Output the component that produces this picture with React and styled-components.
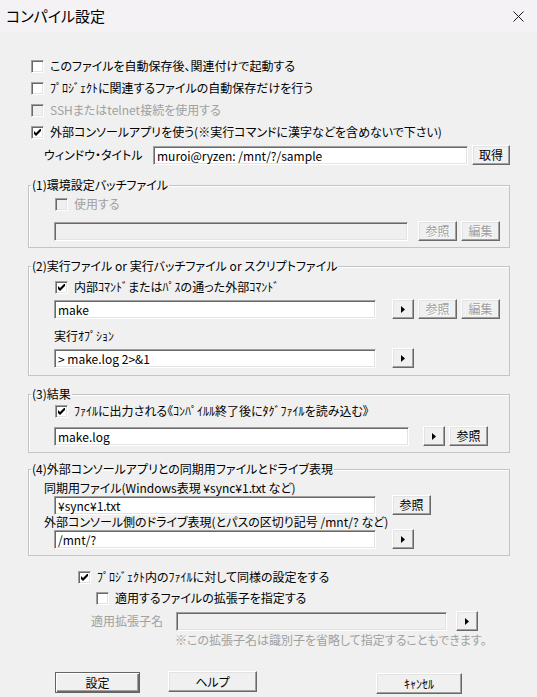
import React from 'react'
import styled, { createGlobalStyle } from 'styled-components'

const Global = createGlobalStyle`
  html, body { margin: 0; padding: 0; background: #f0f0f0; }
  * { box-sizing: border-box; }
`

const Dialog = styled.div`
  width: 537px;
  height: 697px;
  background: #f0f0f0;
  display: flex;
  flex-direction: column;
  overflow: hidden;
  font-family: "Noto Sans CJK JP", "Noto Sans", sans-serif;
  font-feature-settings: "palt";
  font-size: 12px;
  line-height: 14px;
  color: #000;
`

const TitleBar = styled.div`
  height: 32px;
  flex: none;
  background: #f4f2f5;
  display: flex;
  align-items: center;
  justify-content: space-between;
  padding: 0 13px 0 6px;
  font-size: 15px;
  line-height: 20px;
`

const Body = styled.div`
  display: flex;
  flex-direction: column;
  padding: 0 27px 0 28px;
`

/* half-width katakana keep their fixed half-em width */
const Hw = styled.span`
  font-feature-settings: normal;
`

const Row = styled.div`
  display: flex;
  align-items: center;
  height: ${p => p.$h || 20}px;
  margin-top: ${p => p.$mt || 0}px;
  margin-left: ${p => p.$ml || 0}px;
`

const CheckRow = styled.label`
  display: flex;
  align-items: center;
  gap: 6px;
  height: 14px;
  margin-top: ${p => p.$mt || 0}px;
  margin-left: ${p => p.$ml || 0}px;
  color: ${p => (p.$disabled ? '#a0a0a0' : '#000')};
  white-space: nowrap;
`

const Box = styled.span`
  width: 13px;
  height: 13px;
  flex: none;
  border: 1px solid;
  border-color: #a0a0a0 #ffffff #ffffff #a0a0a0;
  box-shadow: inset 1px 1px #696969, inset -1px -1px #e3e3e3;
  background: ${p => (p.$disabled ? '#f0f0f0' : '#ffffff')};
  display: flex;
  align-items: center;
  justify-content: center;
`

const Label = styled.span`
  display: block;
  width: ${p => (p.$w ? `${p.$w}px` : 'auto')};
  flex: none;
  margin-top: ${p => p.$mt || 0}px;
  margin-left: ${p => p.$ml || 0}px;
  color: ${p => (p.$disabled ? '#a0a0a0' : '#000')};
  white-space: nowrap;
`

const Field = styled.div`
  width: ${p => p.$w}px;
  height: 19px;
  flex: none;
  border: 1px solid;
  border-color: #a0a0a0 #ffffff #ffffff #a0a0a0;
  box-shadow: inset 1px 1px #696969, inset -1px -1px #e3e3e3;
  background: ${p => (p.$disabled ? '#f0f0f0' : '#ffffff')};
  padding: 2px 0 0 3px;
  margin-left: ${p => p.$ml || 0}px;
  white-space: nowrap;
  overflow: hidden;
`

const Button = styled.div`
  width: ${p => p.$w}px;
  height: ${p => p.$h || 20}px;
  flex: none;
  margin-left: ${p => p.$ml || 0}px;
  margin-top: ${p => p.$mt || 0}px;
  border: 1px solid;
  border-color: ${p => (p.$default ? '#646464' : '#ffffff #696969 #696969 #ffffff')};
  box-shadow: ${p =>
    p.$default
      ? 'inset 1px 1px #ffffff, inset -1px -1px #696969, inset -2px -2px #a0a0a0'
      : 'inset -1px -1px #a0a0a0, inset 1px 1px #e3e3e3'};
  background: #f0f0f0;
  display: flex;
  align-items: center;
  justify-content: center;
  color: ${p => (p.$disabled ? '#a0a0a0' : '#000')};
  text-shadow: ${p => (p.$disabled ? '1px 1px #ffffff' : 'none')};
  white-space: nowrap;
`

const Group = styled.fieldset`
  margin: ${p => p.$mt || 0}px 0 0 0;
  padding: 0;
  border: 1px solid #c4c4c4;
  box-shadow: inset 1px 1px #ffffff;
  min-inline-size: auto;
`

const Legend = styled.legend`
  margin-left: 2px;
  padding: 0 1px;
  line-height: 14px;
`

const GroupBody = styled.div`
  display: flex;
  flex-direction: column;
  padding: 0 8px ${p => p.$pb || 6}px ${p => p.$pl || 25}px;
`

const Note = styled.div`
  margin: 2px 0 0 147px;
  height: 14px;
  color: #a0a0a0;
  white-space: nowrap;
`

const Footer = styled.div`
  display: flex;
  align-items: flex-start;
  margin-top: 24px;
  padding-left: 27px;
`

function Check({ checked, disabled, children, mt, ml }) {
  return (
    <CheckRow $mt={mt} $ml={ml} $disabled={disabled}>
      <Box $disabled={disabled}>
        {checked && (
          <svg width="7" height="7" viewBox="0 0 7 7">
            <polygon points="0,2 2,4 6,0 7,0 7,2 2,7 0,5" fill="#000" />
          </svg>
        )}
      </Box>
      <span>{children}</span>
    </CheckRow>
  )
}

function Arrow({ ml }) {
  return (
    <Button $w={22} $ml={ml}>
      <svg width="4" height="7" viewBox="0 0 4 7">
        <polygon points="0,0 4,3.5 0,7" fill="#000" />
      </svg>
    </Button>
  )
}

export default function App() {
  return (
    <Dialog>
      <Global />
      <TitleBar>
        <span>コンパイル設定</span>
        <svg width="11" height="11" viewBox="0 0 11 11">
          <path d="M0.5 0.5 L10.5 10.5 M10.5 0.5 L0.5 10.5" stroke="#1a1a1a" strokeWidth="1" />
        </svg>
      </TitleBar>
      <Body>
        <Check mt={27} ml={3}>このファイルを自動保存後、関連付けで起動する</Check>
        <Check mt={8} ml={3}><Hw>ﾌﾟﾛｼﾞｪｸﾄ</Hw>に関連するファイルの自動保存だけを行う</Check>
        <Check mt={8} ml={3} disabled>SSHまたはtelnet接続を使用する</Check>
        <Check mt={8} ml={3} checked>外部コンソールアプリを使う(※実行コマンドに漢字などを含めないで下さい)</Check>
        <Row $mt={6} $ml={16}>
          <Label $w={109}>ウィンドウ・タイトル</Label>
          <Field $w={315}>muroi@ryzen: /mnt/?/sample</Field>
          <Button $w={38} $ml={4}>取得</Button>
        </Row>

        <Group $mt={13}>
          <Legend>(1)環境設定バッチファイル</Legend>
          <GroupBody>
            <Check mt={5} ml={1} disabled>使用する</Check>
            <Row $mt={10}>
              <Field $w={354} $disabled />
              <Button $w={39} $ml={10} $disabled>参照</Button>
              <Button $w={39} $ml={4} $disabled>編集</Button>
            </Row>
          </GroupBody>
        </Group>

        <Group $mt={11}>
          <Legend>(2)実行ファイル or 実行バッチファイル or スクリプトファイル</Legend>
          <GroupBody $pb={7}>
            <Check mt={7} ml={1} checked>内部<Hw>ｺﾏﾝﾄﾞ</Hw>または<Hw>ﾊﾟｽ</Hw>の通った外部<Hw>ｺﾏﾝﾄﾞ</Hw></Check>
            <Row $mt={5}>
              <Field $w={322}>make</Field>
              <Arrow ml={16} />
              <Button $w={39} $ml={4} $disabled>参照</Button>
              <Button $w={39} $ml={4} $disabled>編集</Button>
            </Row>
            <Label $mt={10}>実行<Hw>ｵﾌﾟｼｮﾝ</Hw></Label>
            <Row $mt={5}>
              <Field $w={322}>&gt; make.log 2&gt;&amp;1</Field>
              <Arrow ml={16} />
            </Row>
          </GroupBody>
        </Group>

        <Group $mt={11}>
          <Legend>(3)結果</Legend>
          <GroupBody>
            <Check mt={3} ml={1} checked>
              <Hw>ﾌｧｲﾙ</Hw>に出力される《<Hw>ｺﾝﾊﾟｲﾙﾙ</Hw>終了後に<Hw>ﾀｸﾞﾌｧｲﾙ</Hw>を読み込む》
            </Check>
            <Row $mt={8}>
              <Field $w={355}>make.log</Field>
              <Arrow ml={14} />
              <Button $w={39} $ml={4}>参照</Button>
            </Row>
          </GroupBody>
        </Group>

        <Group $mt={9}>
          <Legend>(4)外部コンソールアプリとの同期用ファイルとドライブ表現</Legend>
          <GroupBody $pl={15}>
            <Label $mt={5}>同期用ファイル(Windows表現 ¥sync¥1.txt など)</Label>
            <Row>
              <Field $w={322} $ml={10}>¥sync¥1.txt</Field>
              <Button $w={39} $ml={16}>参照</Button>
            </Row>
            <Label>外部コンソール側のドライブ表現(とパスの区切り記号 /mnt/? など)</Label>
            <Row>
              <Field $w={322} $ml={10}>/mnt/?</Field>
              <Arrow ml={16} />
            </Row>
          </GroupBody>
        </Group>

        <Check mt={14} ml={50} checked><Hw>ﾌﾟﾛｼﾞｪｸﾄ</Hw>内の<Hw>ﾌｧｲﾙ</Hw>に対して同様の設定をする</Check>
        <Check mt={7} ml={68}>適用するファイルの拡張子を指定する</Check>
        <Row $mt={6} $ml={63}>
          <Label $w={85} $disabled>適用拡張子名</Label>
          <Field $w={271} $disabled />
          <Arrow ml={9} />
        </Row>
        <Note>※この拡張子名は識別子を省略して指定することもできます。</Note>
      </Body>
      <Footer>
        <Button $w={85} $h={21} $ml={28} $mt={1} $default>設定</Button>
        <Button $w={89} $h={21} $ml={28}>ヘルプ</Button>
        <Button $w={86} $h={21} $ml={119} $mt={2}><Hw>ｷｬﾝｾﾙ</Hw></Button>
      </Footer>
    </Dialog>
  )
}
